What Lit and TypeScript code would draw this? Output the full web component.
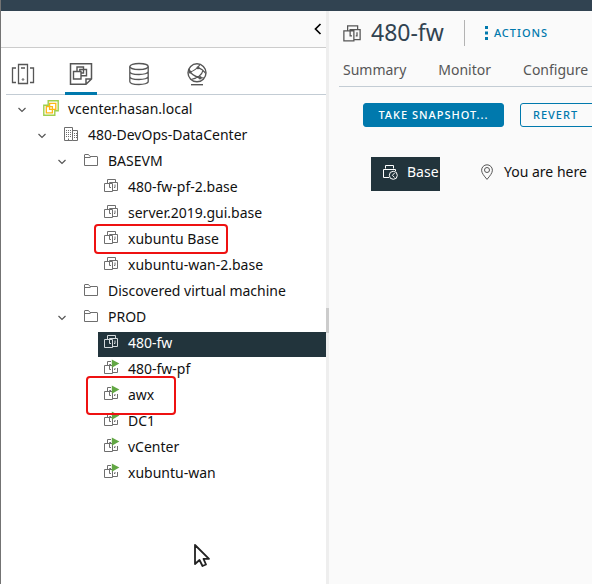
import { LitElement, html, css, svg, nothing } from "lit";
import { customElement } from "lit/decorators.js";
import { classMap } from "lit/directives/class-map.js";

type Kind = "vcenter" | "datacenter" | "folder" | "vm" | "vm-on";
interface Node {
  label: string;
  kind: Kind;
  level: number;
  open?: boolean;
  selected?: boolean;
  mark?: string;
}

const nodes: Node[] = [
  { label: "vcenter.hasan.local", kind: "vcenter", level: 0, open: true },
  { label: "480-DevOps-DataCenter", kind: "datacenter", level: 1, open: true },
  { label: "BASEVM", kind: "folder", level: 2, open: true },
  { label: "480-fw-pf-2.base", kind: "vm", level: 3 },
  { label: "server.2019.gui.base", kind: "vm", level: 3 },
  { label: "xubuntu Base", kind: "vm", level: 3, mark: "mark-base" },
  { label: "xubuntu-wan-2.base", kind: "vm", level: 3 },
  { label: "Discovered virtual machine", kind: "folder", level: 2 },
  { label: "PROD", kind: "folder", level: 2, open: true },
  { label: "480-fw", kind: "vm", level: 3, selected: true },
  { label: "480-fw-pf", kind: "vm-on", level: 3 },
  { label: "awx", kind: "vm-on", level: 3, mark: "mark-awx" },
  { label: "DC1", kind: "vm-on", level: 3 },
  { label: "vCenter", kind: "vm-on", level: 3 },
  { label: "xubuntu-wan", kind: "vm-on", level: 3 },
];

const icons = {
  vcenter: svg`
    <path stroke="#9fd04c" stroke-width="1.4" d="M5.2 .8H15.2V10.8H11.8V15.2H.8V5.2H5.2Z" />
    <path stroke="#fdb813" stroke-width="1.3" d="M6.6 3.3H12.8V9.3H6.6ZM3.3 6.6H9.4V12.8H3.3Z" />`,
  datacenter: svg`
    <path d="M1.5 14.5V1.5H9.5V14.5ZM9.5 4.5H14.5V14.5H9.5" />
    <path stroke-dasharray="1 1" d="M3 4.5H8M3 6.5H8M3 8.5H8M3 10.5H8M11 7.5H14M11 9.5H14M11 11.5H14" />
    <path d="M5.5 14V12.5" />`,
  folder: svg`<path d="M1.5 13.5V3Q1.5 2.5 2 2.5H5.5L7 4.5H14Q14.5 4.5 14.5 5V13.5ZM2 5.5H7.5" />`,
  vm: svg`<path d="M4.5 5.5V1.5H12.5V4.5M1.5 5.5H9.5V13.5H1.5ZM6.5 8V4.5H14.5V12.5H9.5M6.5 8V9.5H8M12 6.5V9.5H11" />`,
  "vm-on": svg`
    <path d="M4.5 5.5V1.5H8M1.5 5.5H9.5V13.5H1.5ZM6.5 8V4.5H8M14.5 8V12.5H9.5M6.5 8V9.5H8M12 8V9.5H11" />
    <path fill="#62a744" stroke="none" d="M8.8 -.4L16.4 3.6L8.8 7.8Z" />`,
  hosts: svg`<path stroke-width="1.3" d="M7.5 2.5H16.5V21.5H7.5ZM5 6H1.5V20.5H5M19 6H22.5V20.5H19M10 6H14" /><circle cx="12" cy="17.5" r=".8" />`,
  vms: svg`
    <path stroke-width="1.5" d="M1.5 1.7H22.5V17L17 22.3H1.5ZM17 22V17H22" />
    <path stroke-width="1.4" d="M4.5 9.5H12V17H4.5ZM8 9.5V5H14.5V7.5M12 13.8H17.5V7.5H10.8V9.5M14.5 7.5V11H12" />`,
  storage: svg`<ellipse stroke-width="1.3" cx="12" cy="4.5" rx="9.2" ry="3" />
    <path stroke-width="1.3" d="M2.8 4.5V19.5C2.8 23.5 21.2 23.5 21.2 19.5V4.5M2.8 9.5C2.8 13.5 21.2 13.5 21.2 9.5M2.8 14.5C2.8 18.5 21.2 18.5 21.2 14.5" />`,
  network: svg`<circle stroke-width="1.4" cx="12" cy="10.8" r="9" />
    <path stroke-width="1.4" d="M6 22.7H18" />
    <path stroke-width="1.2" d="M5 10C8 9.5 13 6 15 2.5M13 5.8C16 6.5 19 9 20.7 11.5M5 10C8 13.5 12 16 19 16M6 17.5C12 16 17 13 18 8.3M4.2 7L5 10" />
    <g fill="currentColor" stroke="none"><circle cx="13" cy="5.8" r="1.5" /><circle cx="5" cy="10" r="1.6" /><circle cx="15" cy="15.8" r="1.7" /></g>`,
  snapshot: svg`
    <path d="M3.5 4.5V1.5H11.5V4.5M7 13.5H1.5V5.5H13.5V7" />
    <circle cx="11.3" cy="11.3" r="4" /><path d="M12.6 9L10.4 11.3L12.6 13.5" />`,
  pin: svg`<path d="M8 15.4C5 11.8 2.6 9 2.6 6.2A5.4 5.4 0 0 1 13.4 6.2C13.4 9 11 11.8 8 15.4Z" /><circle cx="8" cy="6" r="2.5" />`,
};

const icon = (name: keyof typeof icons, box = 16, size = box) =>
  html`<svg class="icon icon-${size}" viewBox="0 0 ${box} ${box}" aria-hidden="true">${icons[name]}</svg>`;

const base = css`
  * { box-sizing: border-box; }
  button { font: inherit; color: inherit; background: none; border: 0; padding: 0; margin: 0; }
  a { color: inherit; text-decoration: none; }
  .icon { display: block; flex: none; fill: none; stroke: currentColor; overflow: visible; }
  .icon-16 { width: 16px; height: 16px; }
  .icon-20 { width: 20px; height: 20px; }
  .icon-24 { width: 24px; height: 24px; }
`;

@customElement("inventory-tree")
export class InventoryTree extends LitElement {
  static styles = [base, css`
    :host { display: block; padding: 2px 0 0 5px; }
    ul { list-style: none; margin: 0; padding: 0; }
    .row { display: flex; align-items: center; height: 26px; }
    .level-1 { padding-left: 20px; }
    .level-2 { padding-left: 40px; }
    .level-3 { padding-left: 60px; }
    .toggle { flex: none; width: 32px; height: 24px; display: grid; place-items: center; color: #565656; }
    .chevron { width: 8px; height: 6px; fill: none; stroke: currentColor; stroke-width: 1.2; }
    .item { position: relative; flex: 1; height: 26px; padding: 0 0 3px 5px; display: flex; align-items: center; gap: 9px; white-space: nowrap; color: #6e6e6e; border-top: 1px solid transparent; background-clip: padding-box; }
    .icon { margin-bottom: 2px; }
    .label { color: #111; }
    .selected { background-color: #22343c; color: #d5dadd; }
    .selected .label { color: #fff; }
    .mark { position: absolute; border: 2px solid #ee1111; border-radius: 4px; pointer-events: none; z-index: 1; }
    .mark-base { left: -4px; top: -4px; width: 134px; height: 30px; }
    .mark-awx { left: -12px; top: -8px; width: 90px; height: 39px; }
  `];

  render() {
    return html`<ul>${nodes.map((n) => html`
      <li class="row level-${n.level}">
        ${n.open
          ? html`<button class="toggle" aria-label="Collapse ${n.label}">
              <svg class="chevron" viewBox="0 0 8 6"><path d="M.5 1L4 4.5L7.5 1" /></svg></button>`
          : html`<span class="toggle"></span>`}
        <a href="#" class=${classMap({ item: true, selected: !!n.selected })}>
          ${icon(n.kind)}<span class="label">${n.label}</span>
          ${n.mark ? html`<span class="mark ${n.mark}"></span>` : nothing}
        </a>
      </li>`)}</ul>`;
  }
}

@customElement("app-root")
export class AppRoot extends LitElement {
  static styles = [base, css`
    :host { display: flex; flex-direction: column; position: relative; min-height: 100vh; overflow: hidden; border-left: 1px solid #737373; background: #fafafa; color: #565656; font: 14px/24px "Noto Sans", "Open Sans", sans-serif; }
    .banner { height: 11px; background: #314351; }
    .body { flex: 1; display: grid; grid-template-columns: 325px 3px minmax(0, 1fr); }
    .sidebar { background: #fff; }
    .sidebar-top { height: 37px; display: flex; justify-content: flex-end; background: #fafafa; border-bottom: 1px solid #ccc; }
    .collapse { width: 16px; height: 36px; display: grid; place-items: center; color: #000; }
    .collapse svg { width: 8px; height: 12px; fill: none; stroke: currentColor; stroke-width: 1.7; }
    .views { display: flex; gap: 26px; height: 47px; margin-left: 5px; padding-left: 1px; border-bottom: 1px solid #c3ccd4; }
    .view { width: 32px; height: 47px; padding-top: 8px; display: grid; place-items: center; border-bottom: 3px solid transparent; color: #565656; }
    .view.active { border-color: #0079ad; }
    .splitter { background: #eee; padding-top: 297px; }
    .thumb { height: 25px; background: #ccc; }
    .main { overflow: hidden; }
    .title { display: flex; align-items: center; height: 46px; padding: 0 0 2px 13px; }
    .title .icon { margin-top: 2px; }
    h1 { margin: 0 0 2px 9px; font-size: 23px; line-height: 32px; font-weight: 400; color: #314351; }
    .divider { width: 1px; height: 26px; margin: 0 20px; background: #b3b3b3; }
    .actions { display: flex; align-items: center; gap: 6px; color: #0079ad; }
    .dots { width: 3px; height: 14px; fill: currentColor; }
    .caps { font-size: 11px; font-weight: 500; letter-spacing: 1px; white-space: nowrap; }
    .tabs { display: flex; gap: 32px; height: 30px; margin-left: 10px; padding: 1px 0 0 4px; border-bottom: 1px solid #c3ccd4; }
    .toolbar { display: flex; gap: 16px; padding: 16px 0 0 34px; }
    .button { flex: none; height: 24px; min-width: 96px; padding: 0 12px; border: 1px solid #0079ad; border-radius: 3px; color: #0079ad; line-height: 22px; text-align: left; }
    .primary { min-width: 141px; background: #0079ad; color: #fff; text-align: center; }
    .snapshots { display: flex; align-items: center; padding: 30px 0 0 42px; color: #565656; white-space: nowrap; }
    .snapshot { display: flex; align-items: center; gap: 9px; height: 34px; width: 69px; padding: 0 0 4px 11px; background: #22343c; color: #fff; }
    .here { display: flex; align-items: center; gap: 9px; margin-left: 39px; padding-bottom: 4px; }
    .here-text { color: #111; }
    .cursor { position: absolute; left: 192px; top: 543px; width: 18px; height: 26px; }
  `];

  render() {
    const views = [["hosts", "Hosts and clusters"], ["vms", "VMs and templates"], ["storage", "Storage"], ["network", "Networking"]] as const;
    return html`
      <header class="banner"></header>
      <div class="body">
        <aside class="sidebar">
          <div class="sidebar-top">
            <button class="collapse" aria-label="Collapse panel"><svg viewBox="0 0 8 12"><path d="M6.5 1L1.5 6L6.5 11" /></svg></button>
          </div>
          <nav class="views">
            ${views.map(([name, label]) => html`
              <button class=${classMap({ view: true, active: name === "vms" })} aria-label=${label}>${icon(name, 24)}</button>`)}
          </nav>
          <inventory-tree></inventory-tree>
        </aside>
        <div class="splitter"><div class="thumb"></div></div>
        <main class="main">
          <div class="title">
            ${icon("vm", 16, 20)}
            <h1>480-fw</h1>
            <span class="divider"></span>
            <button class="actions caps">
              <svg class="dots" viewBox="0 0 3 14"><path d="M0 0h3v3H0zM0 5.5h3v3H0zM0 11h3v3H0z" /></svg>ACTIONS
            </button>
          </div>
          <nav class="tabs"><a href="#">Summary</a><a href="#">Monitor</a><a href="#">Configure</a></nav>
          <div class="toolbar">
            <button class="button primary caps">TAKE SNAPSHOT...</button>
            <button class="button caps">REVERT</button>
          </div>
          <div class="snapshots">
            <a href="#" class="snapshot">${icon("snapshot")}<span>Base</span></a>
            <div class="here">${icon("pin")}<span class="here-text">You are here</span></div>
          </div>
        </main>
      </div>
      <svg class="cursor" viewBox="0 0 18 26"><path fill="#fff" stroke="#222" stroke-width="1.8" stroke-linejoin="round" d="M2 2V21L6.5 17L9.5 23L13 21.5L10.5 15.8H16Z" /></svg>
    `;
  }
}
